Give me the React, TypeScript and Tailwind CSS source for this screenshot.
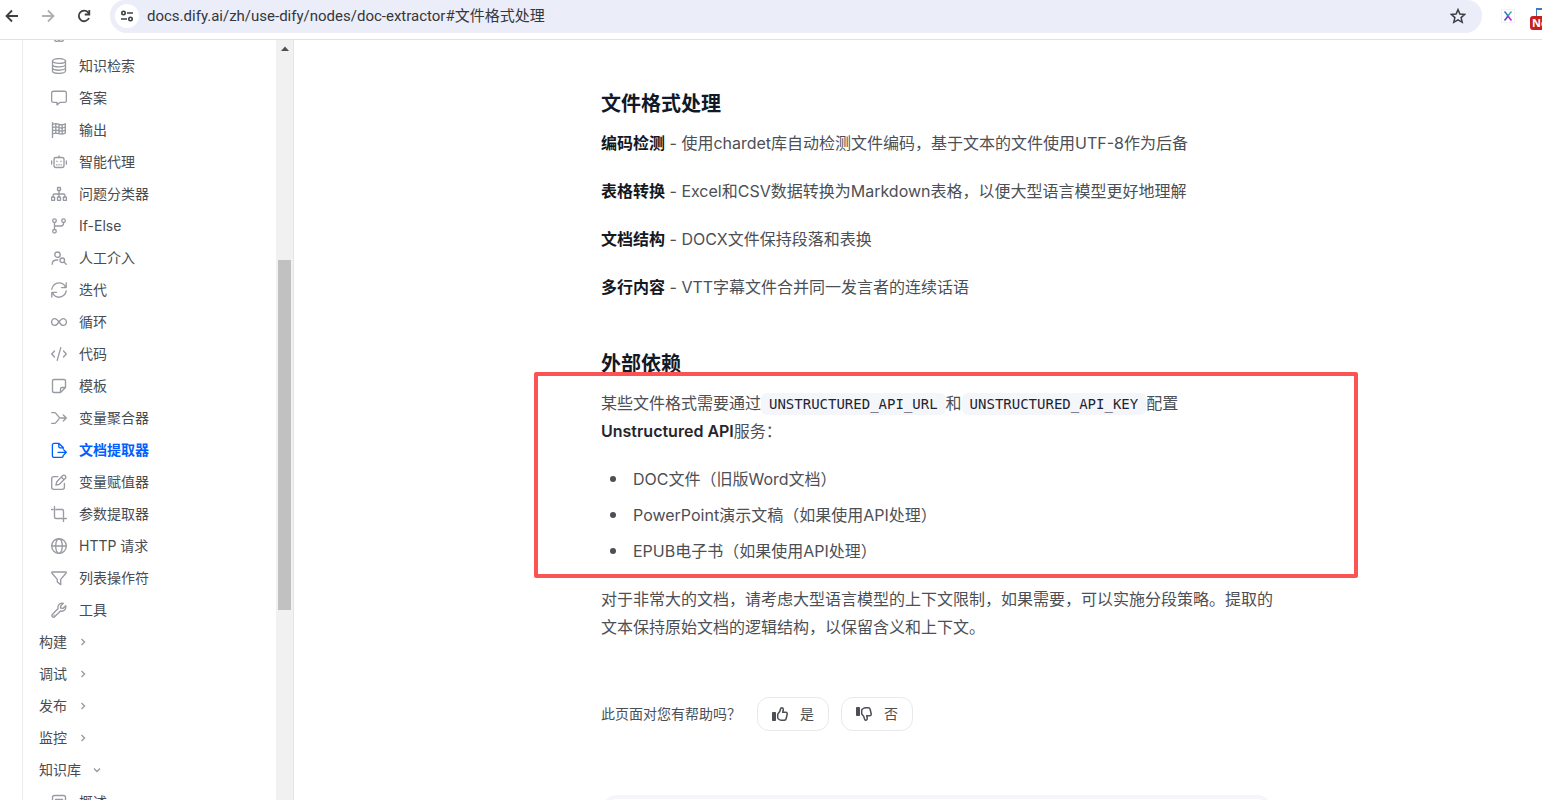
import type { ReactNode } from "react";

const sans = "font-['Inter','Noto_Sans_CJK_SC',sans-serif]";

type Icon_Props = {
  children: ReactNode;
};

const Icon = ({ children }: Icon_Props) => (
  <svg
    className="size-4 shrink-0"
    viewBox="0 0 16 16"
    fill="none"
    stroke="currentColor"
    strokeWidth="1.350"
    strokeLinecap="round"
    strokeLinejoin="round"
    aria-hidden="true"
  >
    {children}
  </svg>
);

const nodes = [
  {
    label: "LLM",
    icon: <path d="M8 2.500v11c0 1.100-.9 2-2.100 2-1.300 0-2.300-.9-2.400-2.100C2 13 1 11.500 1.500 10 .3 8.500.8 6.500 2 5.800 2 4 3.500 3 4.500 3c.5-1.700 3.500-2.300 3.500-.5zm0 11c0 1.100.9 2 2.100 2 1.300 0 2.300-.9 2.400-2.100 1.500-.4 2.500-1.900 2-3.400 1.200-1.500.7-3.500-.5-4.200C14 4 12.500 3 11.500 3 11 1.300 8 .7 8 2.500" />,
  },
  {
    label: "知识检索",
    icon: (
      <>
        <ellipse cx="8" cy="3" rx="6.500" ry="2.400" />
        <path d="M1.500 3v10c0 1.300 2.900 2.400 6.500 2.400s6.500-1.100 6.500-2.400V3M1.500 6.400C1.500 7.700 4.400 8.800 8 8.800s6.500-1.100 6.500-2.400M1.500 9.800c0 1.300 2.900 2.400 6.500 2.400s6.500-1.100 6.500-2.400" />
      </>
    ),
  },
  {
    label: "答案",
    icon: <path d="M2.500 1.200h11c1 0 1.900.8 1.900 1.900v7.300c0 1-.8 1.900-1.900 1.900H9.300L6 14.900v-2.600H2.500c-1 0-1.900-.8-1.900-1.900V3.100c0-1 .8-1.900 1.900-1.900z" />,
  },
  {
    label: "输出",
    icon: <path d="M1.500.6v14.800M1.500 2.300c3-1.200 4.600-.8 6.500 0s3.500.8 6.300-.5v9.400c-2.800 1.200-4.400 1.200-6.300.5s-3.500-.9-6.500.1M1.500 5.500c3-1 4.600-.8 6.500 0s3.500.8 6.300-.5M1.500 8.700c3-1 4.600-.8 6.500 0s3.500.8 6.300-.5M4.800 1.600v9.600M8 2.300v9.400M11.200 2.800v9.200" />,
  },
  {
    label: "智能代理",
    icon: (
      <>
        <rect x="3" y="3.500" width="10" height="10" rx="2" />
        <path d="M8 3.500V1.800M.6 7v3M15.400 7v3M6 7.200v.4M10 7.200v.4M5.600 10.800h.4M7.800 10.800h.4M10 10.800h.4" />
      </>
    ),
  },
  {
    label: "问题分类器",
    icon: (
      <>
        <rect x="6.500" y="1.500" width="3" height="3" rx=".5" />
        <rect x=".6" y="11" width="3" height="3.400" rx=".5" />
        <rect x="6.500" y="11" width="3" height="3.400" rx=".5" />
        <rect x="12.400" y="11" width="3" height="3.400" rx=".5" />
        <path d="M8 4.500V11M2.100 11V9.200c0-.8.400-1.200 1.200-1.200h9.400c.8 0 1.200.4 1.200 1.200V11" />
      </>
    ),
  },
  {
    label: "If-Else",
    icon: (
      <>
        <circle cx="3.500" cy="2.700" r="1.800" />
        <circle cx="12.500" cy="2.700" r="1.800" />
        <circle cx="3.500" cy="13.300" r="1.800" />
        <path d="M3.500 4.600v6.800M12.500 4.600v1c0 1.500-.9 2.400-2.400 2.400H3.500" />
      </>
    ),
  },
  {
    label: "人工介入",
    icon: (
      <>
        <circle cx="6.500" cy="4.700" r="2.700" />
        <circle cx="11.300" cy="10.300" r="2.300" />
        <path d="M13 12l2.200 2.200M1.200 14.300c0-2.900 1.700-4.300 4.600-4.300h1" />
      </>
    ),
  },
  {
    label: "迭代",
    icon: <path d="M15.200 1v4.600h-4.600M14.600 5.400C13.500 2.700 11 .8 8 .8 4.300.8 1.300 3.600.8 7.200M.8 15v-4.600h4.600M1.400 10.600c1.100 2.700 3.600 4.600 6.600 4.600 3.700 0 6.700-2.800 7.200-6.400" />,
  },
  {
    label: "循环",
    icon: <path d="M8 8C6.500 5.800 5.500 4.600 3.900 4.600A3.300 3.300 0 0 0 .6 8c0 1.900 1.500 3.400 3.300 3.400C5.500 11.400 6.500 10.200 8 8s2.500-3.400 4.100-3.400A3.300 3.300 0 0 1 15.400 8c0 1.900-1.500 3.400-3.300 3.400C10.500 11.400 9.500 10.200 8 8z" />,
  },
  { label: "代码", icon: <path d="M9.800 1.600L6.200 14.400M3.500 5L.7 8l2.800 3M12.500 5l2.800 3-2.800 3" /> },
  {
    label: "模板",
    icon: <path d="M3 1.500h10c.8 0 1.500.7 1.500 1.500v6.500l-5 5H3c-.8 0-1.500-.7-1.500-1.500V3c0-.8.7-1.500 1.500-1.500zM9.500 14.200V11c0-.8.7-1.500 1.500-1.500h3.200" />,
  },
  {
    label: "变量聚合器",
    icon: <path d="M.7 2.600h2.800c.6 0 1 .2 1.400.7L8 7.200c.4.500.9.800 1.600.8h5.700M12.300 5l3 3-3 3M.7 13.400h2.800c.6 0 1-.2 1.400-.7L8 8.800" />,
  },
  {
    label: "文档提取器",
    active: true,
    icon: <path d="M12.200 13.400v.4c0 .9-.7 1.600-1.600 1.600H3c-.9 0-1.600-.7-1.600-1.600V3c0-.9.700-1.600 1.600-1.600h5l4.200 4.200v1.200M7.800 1.600V4.600c0 .7.500 1.200 1.200 1.200h3M7 10.300h8.300M12.900 7.900l2.400 2.400-2.400 2.400" />,
  },
  {
    label: "变量赋值器",
    icon: <path d="M6.800 2.600H2.800C1.700 2.600.7 3.500.7 4.700v8.500c0 1.200 1 2.100 2.100 2.100h8.500c1.200 0 2.100-1 2.100-2.100V9.300M11.500 1.700c.8-.8 2-.8 2.700 0s.8 2 0 2.800L8.400 10.300l-3.500.9.900-3.500zM10.300 3l2.700 2.700" />,
  },
  {
    label: "参数提取器",
    icon: <path d="M3.500.6v10.400c0 .9.600 1.500 1.500 1.500h10.400M.6 3.500H2M5 3.500h6c.9 0 1.500.6 1.500 1.500v6M12.500 13.500v1.900" />,
  },
  {
    label: "HTTP 请求",
    icon: (
      <>
        <circle cx="8" cy="8" r="7.300" />
        <ellipse cx="8" cy="8" rx="3.300" ry="7.300" />
        <path d="M.7 8h14.600" />
      </>
    ),
  },
  { label: "列表操作符", icon: <path d="M1 2h14c.3.400.3.800 0 1.200L9.700 9.400v5.200L6.300 12V9.400L1 3.200C.7 2.800.7 2.400 1 2z" /> },
  {
    label: "工具",
    icon: (
      <>
        <path d="M14.700 3.700L12 6.400 9.600 6V3.900l2.700-2.600C10 .6 7 2 6.900 5.200c0 .6.100 1 .2 1.400l-5.600 5.600c-.8.800-.8 1.800-.1 2.500s1.700.700 2.500-.1l5.600-5.600c3 .9 6-1.700 5.200-5.300z" />
        <path d="M3 13.200h.1" />
      </>
    ),
  },
];

const groups = [
  { label: "构建", open: false },
  { label: "调试", open: false },
  { label: "发布", open: false },
  { label: "监控", open: false },
  { label: "知识库", open: true },
];

const notes = [
  { title: "编码检测", text: "使用chardet库自动检测文件编码，基于文本的文件使用UTF-8作为后备" },
  { title: "表格转换", text: "Excel和CSV数据转换为Markdown表格，以便大型语言模型更好地理解" },
  { title: "文档结构", text: "DOCX文件保持段落和表换" },
  { title: "多行内容", text: "VTT字幕文件合并同一发言者的连续话语" },
];

const formats = ["DOC文件（旧版Word文档）", "PowerPoint演示文稿（如果使用API处理）", "EPUB电子书（如果使用API处理）"];

const BrowserBar = () => (
  <header className="flex h-10 shrink-0 items-start overflow-hidden border-b border-[#dfe1e5] bg-white">
    <div className="flex h-8 w-[110px] shrink-0 items-center gap-5 pl-1 text-[#3c4043]">
      <button aria-label="后退">
        <svg className="size-4" viewBox="0 0 16 16" fill="none" stroke="currentColor" strokeWidth="1.800">
          <path d="M14 8H3M8 2.500L2.500 8 8 13.500" />
        </svg>
      </button>
      <button aria-label="前进" className="text-[#aeb1b5]">
        <svg className="size-4" viewBox="0 0 16 16" fill="none" stroke="currentColor" strokeWidth="1.800">
          <path d="M2 8h11M8 2.500L13.500 8 8 13.500" />
        </svg>
      </button>
      <button aria-label="重新加载">
        <svg className="size-4" viewBox="0 0 16 16" fill="none" stroke="currentColor" strokeWidth="1.800">
          <path d="M13 10a5.300 5.300 0 1 1-.9-5.600L13.200 6" />
          <path d="M13.300 2v4.500H8.800" />
        </svg>
      </button>
    </div>
    <div className="flex h-[33px] grow items-center rounded-b-[17px] rounded-t-[15px] bg-[#ebedf8] pr-4 pb-0.5 pl-[5px]">
      <button aria-label="网站信息" className="flex size-6 shrink-0 items-center justify-center rounded-full bg-white text-[#3c4043]">
        <svg className="size-4" viewBox="0 0 16 16" fill="none" stroke="currentColor" strokeWidth="1.600">
          <circle cx="4.500" cy="5" r="1.700" />
          <path d="M8 5h6M2 11h6" />
          <circle cx="11.500" cy="11" r="1.700" />
        </svg>
      </button>
      <input
        aria-label="地址"
        readOnly
        value="docs.dify.ai/zh/use-dify/nodes/doc-extractor#文件格式处理"
        className="ml-2 h-7 grow bg-transparent font-['Roboto','Noto_Sans_CJK_SC',sans-serif] text-[15px] text-[#34373b] outline-none"
      />
      <button aria-label="收藏">
        <svg className="size-4" viewBox="0 0 16 16" fill="none" stroke="#3c4043" strokeWidth="1.500">
          <path d="M8 1.600l1.900 4.400 4.800.4-3.600 3.200 1.100 4.700L8 11.800l-4.200 2.500 1.100-4.700L1.300 6.400 6.100 6z" />
        </svg>
      </button>
    </div>
    <div className="relative flex h-8 w-[60px] shrink-0 items-center pl-5">
      <button aria-label="扩展 X" className="flex size-3 items-center justify-center outline outline-[#f3f3f5]">
        <svg className="size-3" viewBox="0 0 12 12" fill="none" strokeWidth="1.600">
          <path d="M2.500 1.500C4 3 5 4.500 6 6" stroke="#2f6fd6" />
          <path d="M9.500 1.500C8 3 7 4.500 6 6" stroke="#28b8a0" />
          <path d="M6 6c-1 1.500-2 3-3.500 4.500" stroke="#4a4fd8" />
          <path d="M6 6c1 1.500 2 3 3.500 4.500" stroke="#c026d3" />
        </svg>
      </button>
      <span className="absolute top-2 left-[54px] size-4 border-t-2 border-l border-[#3b7ebd]" />
      <span className="absolute top-4 left-12 h-[14px] w-8 rounded-[3px] bg-[#c5221f] pl-0.5 font-['Open_Sans',sans-serif] text-[11px] leading-[14px] font-bold text-white">
        New
      </span>
    </div>
  </header>
);

const Sidebar = () => (
  <aside className="flex w-[294px] shrink-0 border-r border-[#e4e5e8]">
    <nav className="ml-[22px] grow overflow-hidden border-l border-[#ebecee] text-sm text-[#484c52]">
      <ul className="-mt-[22px]">
        {nodes.map((node) => (
          <li key={node.label}>
            <a
              href="#"
              className={
                node.active
                  ? "-ml-px flex h-8 items-center gap-3 border-l border-[#0060ff] pl-7 font-semibold text-[#0060ff]"
                  : "flex h-8 items-center gap-3 pl-7"
              }
            >
              <span className={node.active ? "text-[#0060ff]" : "text-[#989ba3]"}>
                <Icon>{node.icon}</Icon>
              </span>
              {node.label}
            </a>
          </li>
        ))}
        {groups.map((group) => (
          <li key={group.label}>
            <button className="flex h-8 items-center gap-3 pl-4">
              {group.label}
              <svg className="size-2 text-[#989ba3]" viewBox="0 0 8 8" fill="none" stroke="currentColor" strokeWidth="1.400">
                {group.open ? <path d="M1 2.500l3 3 3-3" /> : <path d="M2.500 1l3 3-3 3" />}
              </svg>
            </button>
          </li>
        ))}
        <li>
          <a href="#" className="flex h-8 items-center gap-3 pl-7">
            <span className="text-[#989ba3]">
              <Icon>
                <rect x="1.500" y="1.500" width="13" height="13" rx="2" />
                <path d="M4.500 5.500h7M4.500 8h7M4.500 10.500h4" />
              </Icon>
            </span>
            概述
          </a>
        </li>
      </ul>
    </nav>
    <div className="flex w-[17px] shrink-0 flex-col items-center bg-[#f1f1f1]">
      <svg className="mt-1 h-2 w-2 text-[#505050]" viewBox="0 0 8 8" fill="currentColor" aria-hidden="true">
        <path d="M4 2.500L8 7H0z" />
      </svg>
      <div className="mt-[208px] h-[350px] w-[13px] bg-[#c1c1c1]" />
    </div>
  </aside>
);

const Code = ({ children }: Icon_Props) => (
  <code className="rounded-md bg-[#f5f6fa] px-2 py-[3px] font-['DejaVu_Sans_Mono',monospace] text-sm text-[#1d2433]">
    {children}
  </code>
);

const Thumb = ({ down }: { down?: boolean }) => (
  <svg
    className={down ? "size-4 -scale-y-100" : "size-4"}
    viewBox="0 0 16 16"
    fill="none"
    stroke="currentColor"
    strokeWidth="1.500"
    strokeLinejoin="round"
    aria-hidden="true"
  >
    <rect x="0" y="6" width="4" height="9" rx=".8" fill="currentColor" stroke="none" />
    <path d="M5.700 8.600c0-.7.300-1.100.8-1.500 1.200-1 1.600-2 1.900-3.600.2-1.300.9-1.900 1.700-1.700 1 .2 1.300 1.300 1.100 2.500l-.5 2h3c1 0 1.700.8 1.500 1.700l-1 4.500c-.2 1-1 1.700-2 1.700H9.500c-.8 0-1.500-.2-2.200-.7l-.9-.6c-.4-.3-.7-.8-.7-1.300z" />
  </svg>
);

const App = () => {
  return (
    <div className={`${sans} flex h-screen flex-col overflow-hidden bg-white text-base leading-7 text-[#4c4f55]`}>
      <BrowserBar />
      <div className="flex min-h-0 grow">
        <Sidebar />
        <main className="grow overflow-hidden pt-[49px] pl-[307px]">
          <div className="max-w-[672px]">
            <section>
              <h3 className="mb-2.5 text-xl leading-[30px] font-semibold text-[#111827]">文件格式处理</h3>
              <div className="flex flex-col gap-5">
                {notes.map((note) => (
                  <p key={note.title}>
                    <strong className="font-semibold text-[#15181e]">{note.title}</strong> - {note.text}
                  </p>
                ))}
              </div>
            </section>
            <section className="relative mt-12">
              <h3 className="mb-2.5 text-xl leading-[30px] font-semibold text-[#111827]">外部依赖</h3>
              <p>
                某些文件格式需要通过<Code>UNSTRUCTURED_API_URL</Code>和<Code>UNSTRUCTURED_API_KEY</Code>配置
                <br />
                <strong className="font-semibold text-[#24272d]">Unstructured API</strong>服务：
              </p>
              <ul className="mt-5 flex flex-col gap-2">
                {formats.map((format) => (
                  <li key={format} className="flex items-center gap-[17px] pl-[9px]">
                    <span className="size-[6px] rounded-full bg-[#4c4f55]" />
                    {format}
                  </li>
                ))}
              </ul>
              <div className="pointer-events-none absolute top-[23px] -left-[67px] h-[206px] w-[824px] rounded-xs border-4 border-[#fc5454]" />
            </section>
            <p className="mt-5">
              对于非常大的文档，请考虑大型语言模型的上下文限制，如果需要，可以实施分段策略。提取的文本保持原始文档的逻辑结构，以保留含义和上下文。
            </p>
            <div className="mt-14 flex items-center gap-3 text-sm">
              <p className="mr-1">此页面对您有帮助吗？</p>
              <button className="flex h-[34px] w-[72px] items-center justify-center gap-3 rounded-xl border border-[#e8e9eb]">
                <Thumb />是
              </button>
              <button className="flex h-[34px] w-[72px] items-center justify-center gap-3 rounded-xl border border-[#e8e9eb]">
                <Thumb down />否
              </button>
            </div>
            <div className="mt-16 h-24 rounded-2xl border-4 border-[#f5f6fa]" />
          </div>
        </main>
      </div>
    </div>
  );
};

export default App;
